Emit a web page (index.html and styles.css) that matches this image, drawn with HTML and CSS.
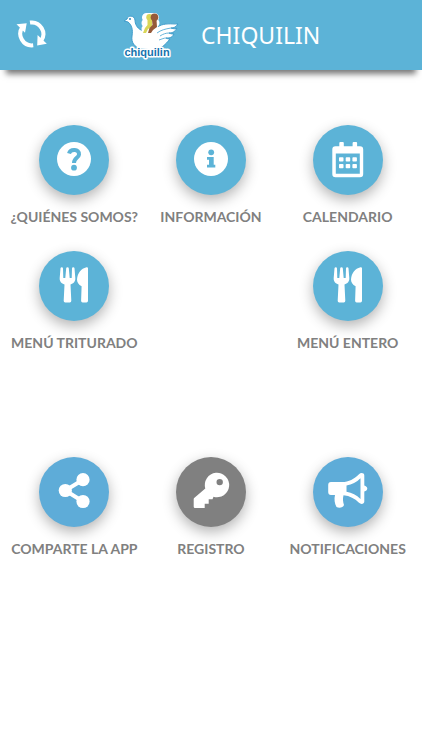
FILE: index.html
```
<!DOCTYPE html>
<html lang="es">
<head>
  <meta charset="UTF-8">
  <meta name="viewport" content="width=device-width, initial-scale=1">
  <title>Chiquilin</title>
  <link rel="stylesheet" href="styles.css">
</head>
<body>

<header class="topbar">
  <button class="refresh" type="button" aria-label="Actualizar">
    <svg viewBox="0 0 32 32" width="32" height="32">
      <path class="arc" d="M17.2 26.3A11.6 11.6 0 0 1 6.500 8"/>
      <path class="arc" d="M14 3.600A11.600 11.600 0 0 1 25 22"/>
      <path class="head" d="M.5 5.300L10.700 4.300 9 13.800z"/>
      <path class="head" d="M21.600 16L30.800 24.800 21.200 26.400z"/>
    </svg>
  </button>
  <svg class="logo" viewBox="0 0 56 50" width="56" height="50" role="img" aria-label="chiquilin">
    <path class="bird" d="M1 11L4 9C5 5 11 5 12 10C12 14 14 18 18 20C24 22 30 20 36 16C42 13 48 14 55 14C53 17 51 18 48 18C51 19 53 19 54 18C52 22 49 23 46 23C48 24 50 24 51 24C49 28 46 28 43 28C45 29 46 29 47 29C42 35 39 38 32 40L18 39C11 37 8 32 9 26C10 20 9 15 5 12z"/>
    <path class="kids-outline" d="M23.500 7.500h8M23 13h9M23 19h8"/>
    <g fill="#fff">
      <circle cx="22.800" cy="7.500" r="3.200"/>
      <path d="M20.500 10h4v8l-5 3v-3l2-2z"/>
    </g>
    <g fill="#d9d657">
      <circle cx="26.500" cy="7.300" r="3.200"/>
      <path d="M24.500 10h4.500v7l-4 2-2 4h-3l2-5 2.500-3z"/>
    </g>
    <g fill="#965a38">
      <circle cx="31.500" cy="7.300" r="3.800"/>
      <path d="M29 10h4.500l.5 7-4 3-2 3h-3l1.500-5 3-3z"/>
    </g>
    <path class="feather" d="M34 23c4-3 8-4 14-5M37 26c3-2 6-3 9-3M36 30c3-1 5-2 7-2"/>
    <circle cx="7" cy="9" r="1" fill="#3788b6"/>
    <text class="logo-text" x="24" y="46" text-anchor="middle">chiquilin</text>
  </svg>
  <h1>CHIQUILIN</h1>
</header>

<main>
  <nav class="menu" aria-label="Menú principal">
    <a class="item" href="#quienes">
      <span class="circle">
        <svg viewBox="0 0 70 70">
          <circle cx="35" cy="34" r="17"/>
          <path class="cut-line" d="M30 28.500C31.500 23.500 40.500 24 40 29.500C39.700 33 35 33 35 38"/>
          <circle class="cut" cx="35" cy="42.700" r="2.900"/>
        </svg>
      </span>
      <span class="label">¿QUIÉNES SOMOS?</span>
    </a>
    <a class="item" href="#informacion">
      <span class="circle">
        <svg viewBox="0 0 70 70">
          <circle cx="35" cy="34" r="17"/>
          <circle class="cut" cx="35.200" cy="27.300" r="2.900"/>
          <path class="cut" d="M31 32h6.700v7.700h1.600v2.700H31v-2.700h2v-5h-2z"/>
        </svg>
      </span>
      <span class="label">INFORMACIÓN</span>
    </a>
    <a class="item" href="#calendario">
      <span class="circle">
        <svg viewBox="0 0 70 70">
          <rect x="26.300" y="17" width="4.500" height="8" rx="1"/>
          <rect x="39.600" y="17" width="4.500" height="8" rx="1"/>
          <path fill-rule="evenodd" d="M22.500 21.300H47a3.200 3.200 0 0 1 3.200 3.200V49a3.200 3.200 0 0 1-3.200 3.200H22.500a3.200 3.200 0 0 1-3.200-3.200V24.500a3.200 3.200 0 0 1 3.200-3.200zM22.800 28.600V48.800H46.800V28.600z"/>
          <rect x="26" y="32.200" width="4.500" height="4.400" rx=".8"/>
          <rect x="32.700" y="32.200" width="4.500" height="4.400" rx=".8"/>
          <rect x="39.400" y="32.200" width="4.500" height="4.400" rx=".8"/>
          <rect x="26" y="38.900" width="4.500" height="4.400" rx=".8"/>
          <rect x="32.700" y="38.900" width="4.500" height="4.400" rx=".8"/>
          <rect x="39.400" y="38.900" width="4.500" height="4.400" rx=".8"/>
        </svg>
      </span>
      <span class="label">CALENDARIO</span>
    </a>
    <a class="item" href="#menu-triturado">
      <span class="circle">
        <svg viewBox="0 0 70 70">
          <path d="M20.700 27L21.500 17.300Q21.700 16.200 22.800 16.200T24 17.400L24.300 27H26.300L27.200 17.300Q27.300 16.200 28.500 16.200T29.800 17.300L30.700 27H32.700L33 17.400Q33 16.200 34.200 16.200T35.500 17.300L36.300 27C36.600 30.500 34.500 32.500 31.500 33.500L32.300 49.800Q32.300 51.400 30.800 51.400H26.200Q24.600 51.400 24.700 49.800L25.500 33.500C22.500 32.500 20.400 30.500 20.700 27z"/>
          <path d="M49 17.200V49.800Q49 51.400 47.400 51.400H43.600Q42.100 51.400 42.100 49.800L42.600 35.300C39.500 33.500 38 31.500 38 28.500C38.500 22 42 17.500 47.500 16.200Q49 16 49 17.200z"/>
        </svg>
      </span>
      <span class="label">MENÚ TRITURADO</span>
    </a>
    <a class="item last-col" href="#menu-entero">
      <span class="circle">
        <svg viewBox="0 0 70 70">
          <path d="M20.700 27L21.500 17.300Q21.700 16.200 22.800 16.200T24 17.400L24.300 27H26.300L27.200 17.300Q27.300 16.200 28.500 16.200T29.800 17.300L30.700 27H32.700L33 17.400Q33 16.200 34.200 16.200T35.500 17.300L36.300 27C36.600 30.500 34.500 32.500 31.500 33.500L32.300 49.800Q32.300 51.400 30.800 51.400H26.200Q24.600 51.400 24.700 49.800L25.500 33.500C22.500 32.500 20.400 30.500 20.700 27z"/>
          <path d="M49 17.200V49.800Q49 51.400 47.400 51.400H43.600Q42.100 51.400 42.100 49.800L42.600 35.300C39.500 33.500 38 31.500 38 28.500C38.500 22 42 17.500 47.500 16.200Q49 16 49 17.200z"/>
        </svg>
      </span>
      <span class="label">MENÚ ENTERO</span>
    </a>
  </nav>

  <nav class="menu" aria-label="Opciones de la app">
    <a class="item" href="#compartir">
      <span class="circle share">
        <svg viewBox="0 0 70 70">
          <path class="link" d="M44 22.700L26.300 33.500L44 44.500"/>
          <circle cx="26.300" cy="33.500" r="6.600"/>
          <circle cx="44" cy="22.700" r="6.600"/>
          <circle cx="44" cy="44.500" r="6.600"/>
        </svg>
      </span>
      <span class="label">COMPARTE LA APP</span>
    </a>
    <a class="item" href="#registro">
      <span class="circle gray">
        <svg viewBox="0 0 70 70">
          <path fill-rule="evenodd" d="M29.300 31.500A12.200 12.200 0 1 1 37.500 39.700L36.500 42.300H32.700V46.700H28.700V51H19Q17.700 51 17.700 49.700V42Q17.700 41.400 18.200 41zM43.700 21.900a3.200 3.200 0 1 0 0 6.400a3.200 3.200 0 1 0 0-6.400z"/>
        </svg>
      </span>
      <span class="label">REGISTRO</span>
    </a>
    <a class="item" href="#notificaciones">
      <span class="circle share">
        <svg viewBox="0 0 70 70">
          <path fill-rule="evenodd" d="M18 25H29C36 25 41 22 46 17.200C48 15.300 51.300 16 51.300 18.500V28.500C53 29 54.300 30 54.300 31.500S53 34 51.300 34.500V44.500C51.300 47 48 47.700 46 45.800C41.500 41.500 37 39 30.500 38.300C29.500 42 30 45 31 48C30 51 26 51.200 23.500 50C21.500 46.500 21 42 22 38H18Q15.200 38 15.200 35V28Q15.200 25 18 25zM33.500 28.500V34.700C39 35.700 43.500 38 47.500 42V21.300C43.500 25.200 39 27.500 33.500 28.500z"/>
        </svg>
      </span>
      <span class="label">NOTIFICACIONES</span>
    </a>
  </nav>
</main>

</body>
</html>
```
FILE: styles.css
```
* {
  box-sizing: border-box;
}

body {
  margin: 0;
  background-color: #fff;
  font-family: Lato, sans-serif;
}

/* Header */
.topbar {
  display: flex;
  align-items: center;
  height: 70px;
  padding: 0 16px;
  background-color: #5cb3d7;
  box-shadow: 0 10px 6px -6px #777;
}

.refresh {
  padding: 0;
  border: none;
  background: none;
  cursor: pointer;
}

.refresh svg {
  display: block;
}

.refresh .arc {
  fill: none;
  stroke: #fff;
  stroke-width: 4;
}

.refresh .head {
  fill: #fff;
}

.logo {
  margin-left: 75px;
  overflow: visible;
}

.bird {
  fill: #fff;
  stroke: #3f9ccb;
  stroke-width: 1;
  stroke-linejoin: round;
}

.kids-outline {
  fill: none;
  stroke: #fff;
  stroke-width: 9;
  stroke-linecap: round;
}

.feather {
  fill: none;
  stroke: #68b5db;
  stroke-width: 1;
}

.logo-text {
  font-family: "Liberation Sans Narrow", "Liberation Sans", sans-serif;
  font-size: 11px;
  font-weight: bold;
  fill: #1674ae;
  stroke: #fff;
  stroke-width: 3px;
  stroke-linejoin: round;
  paint-order: stroke;
}

.topbar h1 {
  margin: 0 0 0 22px;
  font-family: "Noto Sans", sans-serif;
  font-size: 23px;
  font-weight: 400;
  line-height: 32px;
  color: #fff;
}

/* Menu */
main {
  padding: 55px 6px 24px;
}

.menu {
  display: grid;
  grid-template-columns: repeat(3, 1fr);
  row-gap: 24px;
}

.menu + .menu {
  margin-top: 104px;
}

.item {
  display: flex;
  flex-direction: column;
  align-items: center;
  gap: 12px;
  color: #808080;
  text-decoration: none;
}

.last-col {
  grid-column: 3;
}

.circle {
  width: 70px;
  height: 70px;
  border-radius: 50%;
  background-color: #5cb3d7;
  color: #5cb3d7;
  box-shadow: 0 5px 14px rgba(0, 0, 0, 0.3);
}

.circle.share {
  background-color: #5eacd8;
}

.circle.gray {
  background-color: #808080;
}

.circle svg {
  display: block;
  width: 100%;
  height: 100%;
  fill: #fff;
}

.circle .cut {
  fill: currentColor;
}

.circle .cut-line {
  fill: none;
  stroke: currentColor;
  stroke-width: 4;
}

.circle .link {
  fill: none;
  stroke: #fff;
  stroke-width: 4;
}

.label {
  font-size: 14px;
  font-weight: 700;
  line-height: 20px;
  white-space: nowrap;
}
```
